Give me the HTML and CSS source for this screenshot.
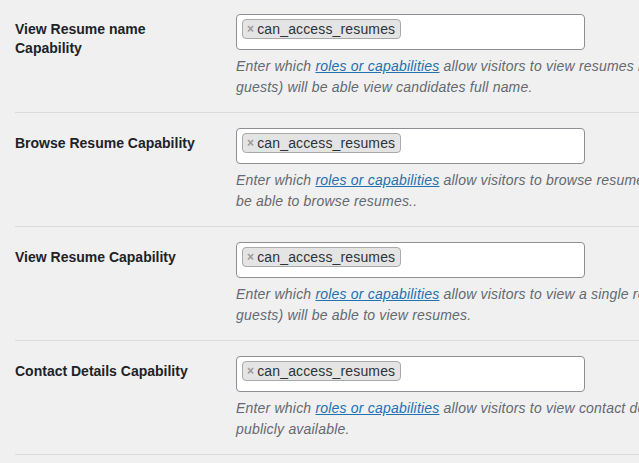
FILE: index.html
```html
<!DOCTYPE html>
<html>
<head>
<meta charset="utf-8">
<link rel="stylesheet" href="styles.css">
</head>
<body>
<div class="settings">
  <div class="row">
    <div class="label">View Resume name Capability</div>
    <div class="field">
      <div class="select">
        <span class="tag"><span class="x">×</span>can_access_resumes</span>
      </div>
      <p class="desc">
        <span class="line">Enter which <a href="#">roles or capabilities</a> allow visitors to view resumes names. Supports a comma separated list of roles/capabilities. If empty, everyone (including</span>
        <span class="line">guests) will be able view candidates full name.</span>
      </p>
    </div>
  </div>
  <div class="row">
    <div class="label">Browse Resume Capability</div>
    <div class="field">
      <div class="select">
        <span class="tag"><span class="x">×</span>can_access_resumes</span>
      </div>
      <p class="desc">
        <span class="line">Enter which <a href="#">roles or capabilities</a> allow visitors to browse resumes. If you enter a role, all users with that role (or greater) will</span>
        <span class="line">be able to browse resumes..</span>
      </p>
    </div>
  </div>
  <div class="row">
    <div class="label">View Resume Capability</div>
    <div class="field">
      <div class="select">
        <span class="tag"><span class="x">×</span>can_access_resumes</span>
      </div>
      <p class="desc">
        <span class="line">Enter which <a href="#">roles or capabilities</a> allow visitors to view a single resume. If empty, everyone (including</span>
        <span class="line">guests) will be able to view resumes.</span>
      </p>
    </div>
  </div>
  <div class="row">
    <div class="label">Contact Details Capability</div>
    <div class="field">
      <div class="select">
        <span class="tag"><span class="x">×</span>can_access_resumes</span>
      </div>
      <p class="desc">
        <span class="line">Enter which <a href="#">roles or capabilities</a> allow visitors to view contact details. If empty, contact details will be made</span>
        <span class="line">publicly available.</span>
      </p>
    </div>
  </div>
</div>
</body>
</html>
```
FILE: styles.css
```css
html, body {
  margin: 0;
  padding: 0;
  background: #f0f0f1;
  overflow: hidden;
}
body {
  font-family: "Liberation Sans", Arial, sans-serif;
  font-size: 14px;
  color: #1d2327;
  width: 639px;
  height: 463px;
}
.settings {
  margin-left: 15px;
  width: 900px;
}
.row {
  display: grid;
  grid-template-columns: 221px 1fr;
  padding: 15px 0 14px;
  border-bottom: 1px solid #dcdcde;
}
.row:first-child {
  padding-top: 14px;
}
.label {
  width: 200px;
  font-weight: bold;
  line-height: 19px;
  padding-top: 6px;
}
.select {
  width: 347px;
  height: 34px;
  box-sizing: content-box;
  background: #fff;
  border: 1px solid #8c8f94;
  border-radius: 4px;
  padding: 0;
  display: flex;
  align-items: flex-start;
}
.tag {
  display: inline-flex;
  align-items: center;
  margin: 4px 0 0 5px;
  height: 18px;
  padding: 0 5px 0 4px;
  background: #e4e4e4;
  border: 1px solid #aaa;
  border-radius: 4px;
  color: #2c3338;
  font-size: 14px;
  line-height: 18px;
  letter-spacing: 0.15px;
}
.x {
  color: #999;
  font-weight: bold;
  font-size: 12px;
  margin-right: 3px;
}
.desc {
  margin: 6px 0 0;
  font-style: italic;
  color: #646970;
  line-height: 21px;
  letter-spacing: 0.2px;
}
.line {
  display: block;
  white-space: nowrap;
}
.desc a {
  color: #2271b1;
  text-decoration: underline;
}
```
